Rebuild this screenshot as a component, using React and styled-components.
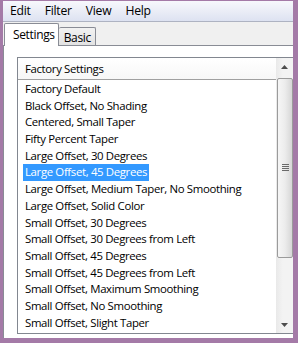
import React from 'react';
import styled, { createGlobalStyle } from 'styled-components';

const GlobalStyle = createGlobalStyle`
  html, body {
    margin: 0;
    padding: 0;
    background: #ffffff;
  }
  body {
    font-family: "Open Sans", "Noto Sans", sans-serif;
    font-size: 11.4px;
    letter-spacing: -0.35px;
    color: #000;
  }
`;

const items = [
  'Factory Default',
  'Black Offset, No Shading',
  'Centered, Small Taper',
  'Fifty Percent Taper',
  'Large Offset, 30 Degrees',
  'Large Offset, 45 Degrees',
  'Large Offset, Medium Taper, No Smoothing',
  'Large Offset, Solid Color',
  'Small Offset, 30 Degrees',
  'Small Offset, 30 Degrees from Left',
  'Small Offset, 45 Degrees',
  'Small Offset, 45 Degrees from Left',
  'Small Offset, Maximum Smoothing',
  'Small Offset, No Smoothing',
  'Small Offset, Slight Taper',
];

const Frame = styled.div`
  width: 298px;
  height: 343px;
  box-sizing: border-box;
  border-style: solid;
  border-color: #a47aa7;
  border-width: 1px 5px 5px 3px;
  display: flex;
  flex-direction: column;
  overflow: hidden;
  background: #f0f0f0;
`;

const MenuBar = styled.div`
  height: 20px;
  display: flex;
  align-items: center;
  gap: 14px;
  padding-left: 7px;
  background: linear-gradient(#f7f8fc, #e9ecf6 55%, #dde2f1);
  border-bottom: 1px solid #aeb3c2;
  font-size: 12.2px;
  letter-spacing: -0.25px;
`;

const MenuItem = styled.span`
  line-height: 20px;
`;

const TabStrip = styled.div`
  height: 23px;
  display: flex;
  align-items: flex-end;
  padding-left: 1px;
  background: #f0f0f0;
`;

const Tab = styled.div`
  box-sizing: border-box;
  height: ${p => (p.$active ? '23px' : '18px')};
  padding: ${p => (p.$active ? '3px 3px 0 8px' : '2px 4px 0 5px')};
  border: 1px solid #898c95;
  border-bottom: none;
  border-left-width: ${p => (p.$active ? '1px' : '0')};
  background: ${p => (p.$active ? '#ffffff' : 'linear-gradient(#f2f2f2, #e2e2e2)')};
  border-radius: 2px 2px 0 0;
  margin-bottom: ${p => (p.$active ? '-1px' : '0')};
  position: relative;
  z-index: ${p => (p.$active ? 1 : 0)};
  font-size: 12px;
  line-height: 15px;
`;

const Panel = styled.div`
  flex: 1;
  min-height: 0;
  display: flex;
  flex-direction: column;
  background: #ffffff;
  border-top: 1px solid #898c95;
  border-left: 1px solid #898c95;
  padding: 11px 0 4px 13px;
`;

const ListBox = styled.div`
  flex: 1;
  min-height: 0;
  display: flex;
  border: 1px solid #828790;
  border-right: none;
  background: #ffffff;
`;

const ListBody = styled.div`
  flex: 1;
  min-width: 0;
  overflow: hidden;
  display: flex;
  flex-direction: column;
`;

const Header = styled.div`
  height: 21px;
  line-height: 21px;
  padding-left: 7px;
  border-bottom: 1px solid #a0a0a0;
  background: linear-gradient(#ffffff, #f7f7f7);
  white-space: nowrap;
  flex-shrink: 0;
`;

const Rows = styled.div`
  padding-top: 1px;
`;

const Row = styled.div`
  height: 16.7px;
  line-height: 16.7px;
  padding-left: 5px;
  white-space: nowrap;
`;

const Label = styled.span`
  display: inline-block;
  padding: 0 2px;
  background: ${p => (p.$selected ? '#3399ff' : 'transparent')};
  color: ${p => (p.$selected ? '#ffffff' : '#000000')};
`;

const ScrollBar = styled.div`
  width: 17px;
  flex-shrink: 0;
  display: flex;
  flex-direction: column;
  background: linear-gradient(90deg, #e9e9e9, #f3f3f3 40%, #f3f3f3);
`;

const ArrowButton = styled.div`
  height: 17px;
  display: flex;
  align-items: center;
  justify-content: center;
  flex-shrink: 0;
`;

const Track = styled.div`
  flex: 1;
  padding: 3px 0 0 1px;
`;

const Thumb = styled.div`
  height: 180px;
  box-sizing: border-box;
  border: 1px solid #9b9b9b;
  border-radius: 2px;
  background: linear-gradient(90deg, #f6f6f6, #ececec 50%, #d6d6d6);
  display: flex;
  align-items: center;
  justify-content: center;
`;

const Arrow = ({ up }) => (
  <svg width="7" height="4" viewBox="0 0 7 4">
    <path d={up ? 'M3.5 0 L7 4 L0 4 Z' : 'M0 0 L7 0 L3.5 4 Z'} fill="#4d4d4d" />
  </svg>
);

const Grip = () => (
  <svg width="7" height="8" viewBox="0 0 7 8">
    {[0.5, 2.5, 4.5, 6.5].map(y => (
      <line key={y} x1="0" x2="7" y1={y} y2={y} stroke="#6a6a6a" strokeWidth="1" />
    ))}
  </svg>
);

export default function App() {
  return (
    <>
      <GlobalStyle />
      <Frame>
        <MenuBar>
          <MenuItem>Edit</MenuItem>
          <MenuItem>Filter</MenuItem>
          <MenuItem>View</MenuItem>
          <MenuItem>Help</MenuItem>
        </MenuBar>
        <TabStrip>
          <Tab $active>Settings</Tab>
          <Tab>Basic</Tab>
        </TabStrip>
        <Panel>
          <ListBox>
            <ListBody>
              <Header>Factory Settings</Header>
              <Rows>
                {items.map(item => (
                  <Row key={item}>
                    <Label $selected={item === 'Large Offset, 45 Degrees'}>{item}</Label>
                  </Row>
                ))}
              </Rows>
            </ListBody>
            <ScrollBar>
              <ArrowButton><Arrow up /></ArrowButton>
              <Track>
                <Thumb><Grip /></Thumb>
              </Track>
              <ArrowButton><Arrow /></ArrowButton>
            </ScrollBar>
          </ListBox>
        </Panel>
      </Frame>
    </>
  );
}
